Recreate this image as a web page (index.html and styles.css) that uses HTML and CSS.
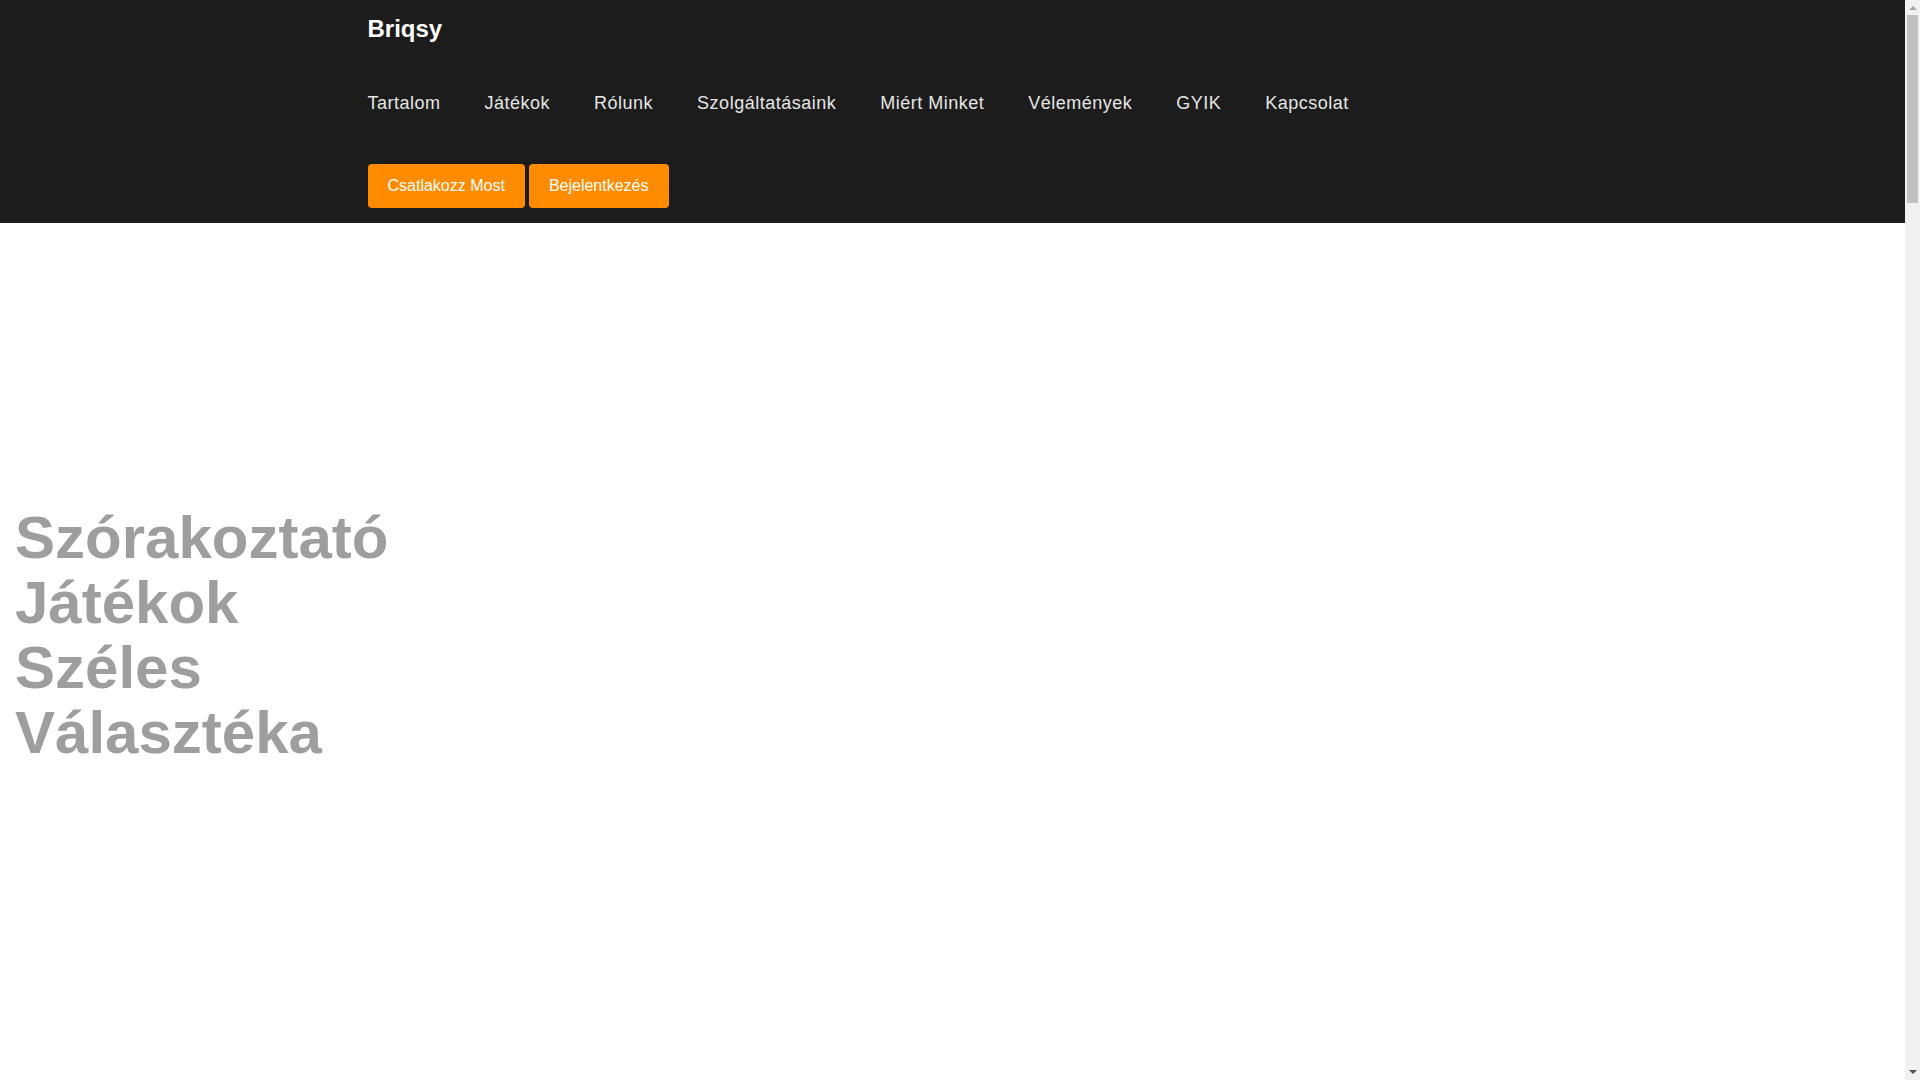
FILE: index.html
```html
<!DOCTYPE html>
<html lang="hu">
<head>
<meta charset="utf-8">
<title>Briqsy</title>
<link rel="stylesheet" href="styles.css">
</head>
<body>
<div class="frame">
  <div class="page">
    <header class="site-header">
      <div class="container">
        <a class="logo" href="#">Briqsy</a>
        <nav class="main-nav">
          <ul class="nav-list">
            <li><a href="#">Tartalom</a></li>
            <li><a href="#">Játékok</a></li>
            <li><a href="#">Rólunk</a></li>
            <li><a href="#">Szolgáltatásaink</a></li>
            <li><a href="#">Miért Minket</a></li>
            <li><a href="#">Vélemények</a></li>
            <li><a href="#">GYIK</a></li>
            <li><a href="#">Kapcsolat</a></li>
          </ul>
        </nav>
        <div class="actions">
          <a class="btn" href="#">Csatlakozz Most</a>
          <a class="btn" href="#">Bejelentkezés</a>
        </div>
      </div>
    </header>
    <main>
      <section class="hero">
        <div class="hero-inner">
          <h1 class="hero-title">Szórakoztató Játékok Széles Választéka</h1>
        </div>
      </section>
    </main>
  </div>
  <div class="scrollbar" aria-hidden="true">
    <span class="scroll-arrow up"></span>
    <span class="scroll-thumb"></span>
    <span class="scroll-arrow down"></span>
  </div>
</div>
</body>
</html>
```

FILE: styles.css
```css
html, body {
  margin: 0;
  padding: 0;
  height: 100%;
  overflow: hidden;
}

body {
  font-family: "Liberation Sans", Arial, sans-serif;
  background: #ffffff;
  color: #333333;
}

.frame {
  display: grid;
  grid-template-columns: 1fr 15px;
  height: 100vh;
  overflow: hidden;
}

.page {
  min-width: 0;
  overflow: hidden;
}

a {
  text-decoration: none;
}

.site-header {
  background: #1c1c1c;
  padding: 15px 0;
}

.container {
  width: 1170px;
  margin: 0 auto;
}

.logo {
  display: block;
  width: max-content;
  font-size: 24px;
  font-weight: bold;
  line-height: normal;
  color: #ffffff;
}

.main-nav {
  padding: 50px 0;
}

.nav-list {
  list-style: none;
  margin: 0;
  padding: 0;
  display: flex;
  gap: 44px;
}

.nav-list a {
  font-size: 18px;
  line-height: normal;
  letter-spacing: 0.5px;
  color: #e6e6e6;
}

.actions {
  display: flex;
  gap: 4px;
}

.btn {
  display: inline-block;
  background: #ff8c00;
  color: #ffffff;
  font-size: 16px;
  line-height: 20px;
  padding: 12px 20px;
  border-radius: 4px;
}

.hero {
  min-height: 857px;
  box-sizing: border-box;
  padding: 282px 15px 0;
}

.hero-title {
  margin: 0;
  max-width: 400px;
  font-size: 60px;
  font-weight: bold;
  line-height: 65px;
  color: #9e9e9e;
}

/* scrollbar chrome */
.scrollbar {
  background: #f1f1f1;
  display: flex;
  flex-direction: column;
  align-items: center;
}

.scroll-arrow {
  width: 0;
  height: 0;
  border-left: 4px solid transparent;
  border-right: 4px solid transparent;
}

.scroll-arrow.up {
  border-bottom: 4px solid #a3a3a3;
  margin: 6px 0 5px;
}

.scroll-arrow.down {
  border-top: 4px solid #505050;
  margin: auto 0 6px;
}

.scroll-thumb {
  width: 11px;
  height: 188px;
  background: #c1c1c1;
}
```
